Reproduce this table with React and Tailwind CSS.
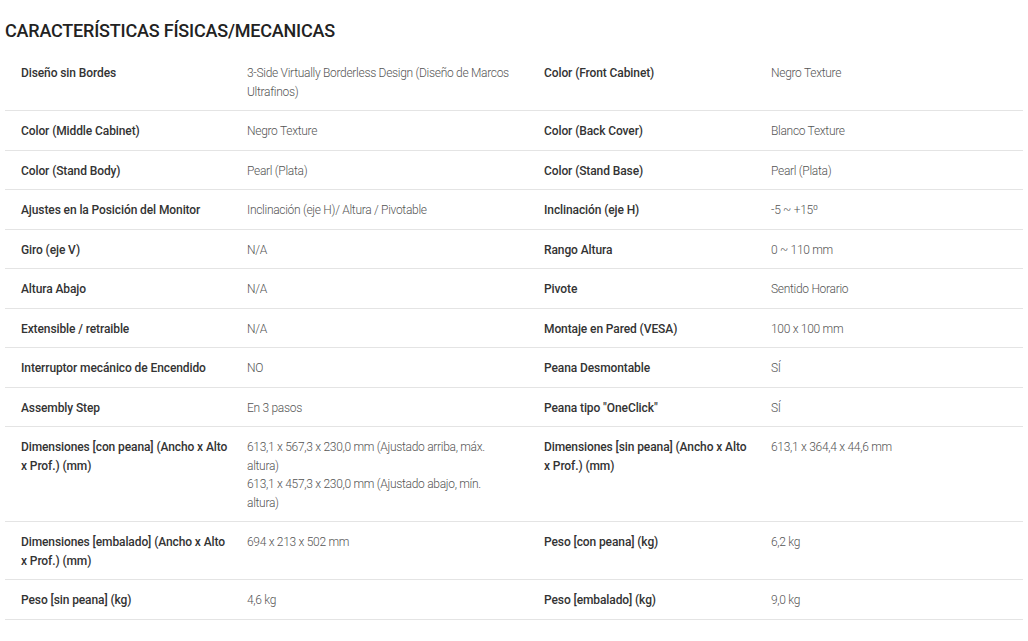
import React from 'react';

const rows = [
  ['Diseño sin Bordes', '3-Side Virtually Borderless Design (Diseño de Marcos Ultrafinos)', 'Color (Front Cabinet)', 'Negro Texture'],
  ['Color (Middle Cabinet)', 'Negro Texture', 'Color (Back Cover)', 'Blanco Texture'],
  ['Color (Stand Body)', 'Pearl (Plata)', 'Color (Stand Base)', 'Pearl (Plata)'],
  ['Ajustes en la Posición del Monitor', 'Inclinación (eje H)/ Altura / Pivotable', 'Inclinación (eje H)', '-5 ~ +15º'],
  ['Giro (eje V)', 'N/A', 'Rango Altura', '0 ~ 110 mm'],
  ['Altura Abajo', 'N/A', 'Pivote', 'Sentido Horario'],
  ['Extensible / retraible', 'N/A', 'Montaje en Pared (VESA)', '100 x 100 mm'],
  ['Interruptor mecánico de Encendido', 'NO', 'Peana Desmontable', 'SÍ'],
  ['Assembly Step', 'En 3 pasos', 'Peana tipo "OneClick"', 'SÍ'],
  [
    'Dimensiones [con peana] (Ancho x Alto x Prof.) (mm)',
    ['613,1 x 567,3 x 230,0 mm (Ajustado arriba, máx. altura)', '613,1 x 457,3 x 230,0 mm (Ajustado abajo, mín. altura)'],
    'Dimensiones [sin peana] (Ancho x Alto x Prof.) (mm)',
    '613,1 x 364,4 x 44,6 mm',
  ],
  ['Dimensiones [embalado] (Ancho x Alto x Prof.) (mm)', '694 x 213 x 502 mm', 'Peso [con peana] (kg)', '6,2 kg'],
  ['Peso [sin peana] (kg)', '4,6 kg', 'Peso [embalado] (kg)', '9,0 kg'],
];

function Value({ v }) {
  if (Array.isArray(v)) {
    return v.map((line, i) => <div key={i}>{line}</div>);
  }
  return v;
}

export default function App() {
  return (
    <div className="bg-white min-h-screen overflow-hidden px-[5px] font-['Roboto',sans-serif]">
      <h2 className="pt-[19px] mb-[10px] text-[18px] leading-[24px] font-medium text-[#222] tracking-[-0.2px]">
        CARACTERÍSTICAS FÍSICAS/MECANICAS
      </h2>

      <div className="leading-[18.5px]">
        {rows.map((r, i) => (
          <div key={i} className="grid grid-cols-[226px_297px_227px_1fr] border-b border-[#e4e4e4]">
            <div className="pt-[11px] pb-[9px] pl-4 pr-0 text-[12px] tracking-[-0.1px] font-medium text-[#333]">{r[0]}</div>
            <div className="pt-[11px] pb-[9px] pl-4 pr-[14px] text-[12px] tracking-[-0.3px] font-light text-[#555]"><Value v={r[1]} /></div>
            <div className="pt-[11px] pb-[9px] pl-4 pr-0 text-[12px] tracking-[-0.1px] font-medium text-[#333]">{r[2]}</div>
            <div className="pt-[11px] pb-[9px] pl-4 pr-4 text-[12px] tracking-[-0.3px] font-light text-[#555]"><Value v={r[3]} /></div>
          </div>
        ))}
      </div>
    </div>
  );
}
